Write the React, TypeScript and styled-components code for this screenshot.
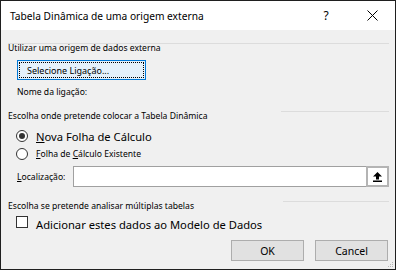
import React from "react";
import styled, { createGlobalStyle } from "styled-components";

const Global = createGlobalStyle`
  html, body { margin: 0; padding: 0; background: #ffffff; }
  body { font-family: "Noto Sans", "Liberation Sans", sans-serif; }
`;

const Window = styled.div`
  position: relative;
  width: 396px;
  height: 270px;
  box-sizing: border-box;
  border: 1px solid #1f1f1f;
  display: flex;
  flex-direction: column;
  background: #f0f0f0;
  color: #000;
`;

const TitleBar = styled.div`
  height: 29px;
  background: #ffffff;
  display: flex;
  align-items: center;
  padding-left: 9px;
  font-size: 10.2px;
`;

const Title = styled.span`
  flex: 1;
  line-height: 16px;
`;

const TitleButton = styled.div<{ $w: number }>`
  width: ${(p) => p.$w}px;
  height: 29px;
  display: flex;
  align-items: center;
  justify-content: center;
  font-size: 12px;
`;

const Body = styled.div`
  flex: 1;
  display: flex;
  flex-direction: column;
  padding: 0 6px 0 7px;
  font-size: 8.6px;
`;

const SectionHeader = styled.div<{ $top: number }>`
  display: grid;
  margin-top: ${(p) => p.$top}px;
  line-height: 11px;
`;

const HeaderText = styled.span`
  grid-area: 1 / 1;
  justify-self: start;
`;

const Rule = styled.div<{ $w: number | null }>`
  grid-area: 1 / 1;
  align-self: start;
  justify-self: end;
  width: ${(p) => (p.$w ? `${p.$w}px` : "100%")};
  height: 1px;
  background: #dcdcdc;
`;

const LinkButton = styled.button`
  margin: 6px 0 0 9px;
  width: 129px;
  height: 20px;
  padding: 1px;
  box-sizing: border-box;
  border: 1px solid #0078d7;
  background: #e5f1fb;
  font: inherit;
  font-size: 9px;
  color: #000;
  display: flex;
`;

const FocusRect = styled.span`
  flex: 1;
  border: 1px dotted #000;
  display: flex;
  align-items: center;
  padding-left: 7px;
`;

const PlainLabel = styled.div<{ $top: number }>`
  margin: ${(p) => p.$top}px 0 0 9px;
  line-height: 14px;
`;

const OptionRow = styled.label<{ $top: number; $big?: boolean }>`
  display: flex;
  align-items: center;
  margin: ${(p) => p.$top}px 0 0 8px;
  height: 14px;
  gap: 8px;
  font-size: ${(p) => (p.$big ? "11.2px" : "8.6px")};
`;

const Radio = styled.span<{ $checked?: boolean }>`
  width: 12px;
  height: 12px;
  box-sizing: border-box;
  border-radius: 50%;
  border: 1px solid #333;
  background: #fff;
  display: flex;
  align-items: center;
  justify-content: center;
  &::after {
    content: "";
    width: 6px;
    height: 6px;
    border-radius: 50%;
    background: ${(p) => (p.$checked ? "#333" : "transparent")};
  }
`;

const LocationRow = styled.div`
  display: flex;
  align-items: center;
  margin: 5px 0 0 9px;
  gap: 8px;
`;

const InputBox = styled.div`
  flex: 1;
  height: 21px;
  box-sizing: border-box;
  border: 1px solid #a0a0a0;
  background: #fff;
  display: flex;
  justify-content: flex-end;
`;

const PickButton = styled.div`
  width: 23px;
  box-sizing: border-box;
  margin: -1px -1px -1px 0;
  border: 2px solid #b4b4b4;
  background: #fff;
  display: flex;
  align-items: center;
  justify-content: center;
`;

const CheckRow = styled.label`
  display: flex;
  align-items: flex-start;
  margin: 4px 0 0 8px;
  gap: 8px;
  font-size: 11.2px;
`;

const CheckBox = styled.span`
  width: 12px;
  height: 12px;
  box-sizing: border-box;
  border: 1px solid #333;
  background: #fff;
`;

const CheckText = styled.span`
  margin-top: 2px;
  line-height: 14px;
`;

const Footer = styled.div`
  display: flex;
  justify-content: flex-end;
  gap: 11px;
  margin: 8px 1px 0 0;
`;

const DialogButton = styled.button`
  width: 73px;
  height: 21px;
  box-sizing: border-box;
  border: 1px solid #adadad;
  background: #e1e1e1;
  font: inherit;
  font-size: 10.5px;
  color: #000;
  padding: 0;
`;

const Grip = styled.svg`
  position: absolute;
  right: 1px;
  bottom: 1px;
`;

const UnderlinedKey = styled.span`
  text-decoration: underline;
`;

export default function App() {
  return (
    <>
      <Global />
      <Window>
        <TitleBar>
          <Title>Tabela Dinâmica de uma origem externa</Title>
          <TitleButton $w={46}>?</TitleButton>
          <TitleButton $w={46}>
            <svg width="11" height="11" viewBox="0 0 11 11">
              <path d="M0.5 0.5 L10.5 10.5 M10.5 0.5 L0.5 10.5" stroke="#000" strokeWidth="1" fill="none" />
            </svg>
          </TitleButton>
        </TitleBar>
        <Body>
          <SectionHeader $top={13}>
            <Rule $w={null} />
            <HeaderText>Utilizar uma origem de dados externa</HeaderText>
          </SectionHeader>
          <LinkButton>
            <FocusRect>Selecione Ligação...</FocusRect>
          </LinkButton>
          <PlainLabel $top={5}>Nome da ligação:</PlainLabel>
          <SectionHeader $top={12}>
            <HeaderText>Escolha onde pretende colocar a Tabela Dinâmica</HeaderText>
            <Rule $w={108} />
          </SectionHeader>
          <OptionRow $top={7} $big>
            <Radio $checked />
            <span>
              <UnderlinedKey>N</UnderlinedKey>ova Folha de Cálculo
            </span>
          </OptionRow>
          <OptionRow $top={4}>
            <Radio />
            <span>
              <UnderlinedKey>F</UnderlinedKey>olha de <UnderlinedKey>C</UnderlinedKey>álculo Existente
            </span>
          </OptionRow>
          <LocationRow>
            <span>
              <UnderlinedKey>L</UnderlinedKey>ocalização:
            </span>
            <InputBox>
              <PickButton>
                <svg width="9" height="10" viewBox="0 0 9 10">
                  <path d="M4.5 0 L9 4.5 L6 4.5 L6 7.5 L3 7.5 L3 4.5 L0 4.5 Z" fill="#000" />
                  <rect x="0" y="8.5" width="9" height="1.5" fill="#000" />
                </svg>
              </PickButton>
            </InputBox>
          </LocationRow>
          <SectionHeader $top={14}>
            <HeaderText>Escolha se pretende analisar múltiplas tabelas</HeaderText>
            <Rule $w={106} />
          </SectionHeader>
          <CheckRow>
            <CheckBox />
            <CheckText>Adicionar estes dados ao Modelo de Dados</CheckText>
          </CheckRow>
          <Footer>
            <DialogButton>OK</DialogButton>
            <DialogButton>Cancel</DialogButton>
          </Footer>
        </Body>
        <Grip width="7" height="7" viewBox="0 0 7 7">
          <rect x="5" y="1" width="1" height="1" fill="#b8b8b8" />
          <rect x="3" y="3" width="1" height="1" fill="#b8b8b8" />
          <rect x="5" y="3" width="1" height="1" fill="#b8b8b8" />
          <rect x="1" y="5" width="1" height="1" fill="#b8b8b8" />
          <rect x="3" y="5" width="1" height="1" fill="#b8b8b8" />
          <rect x="5" y="5" width="1" height="1" fill="#b8b8b8" />
        </Grip>
      </Window>
    </>
  );
}
